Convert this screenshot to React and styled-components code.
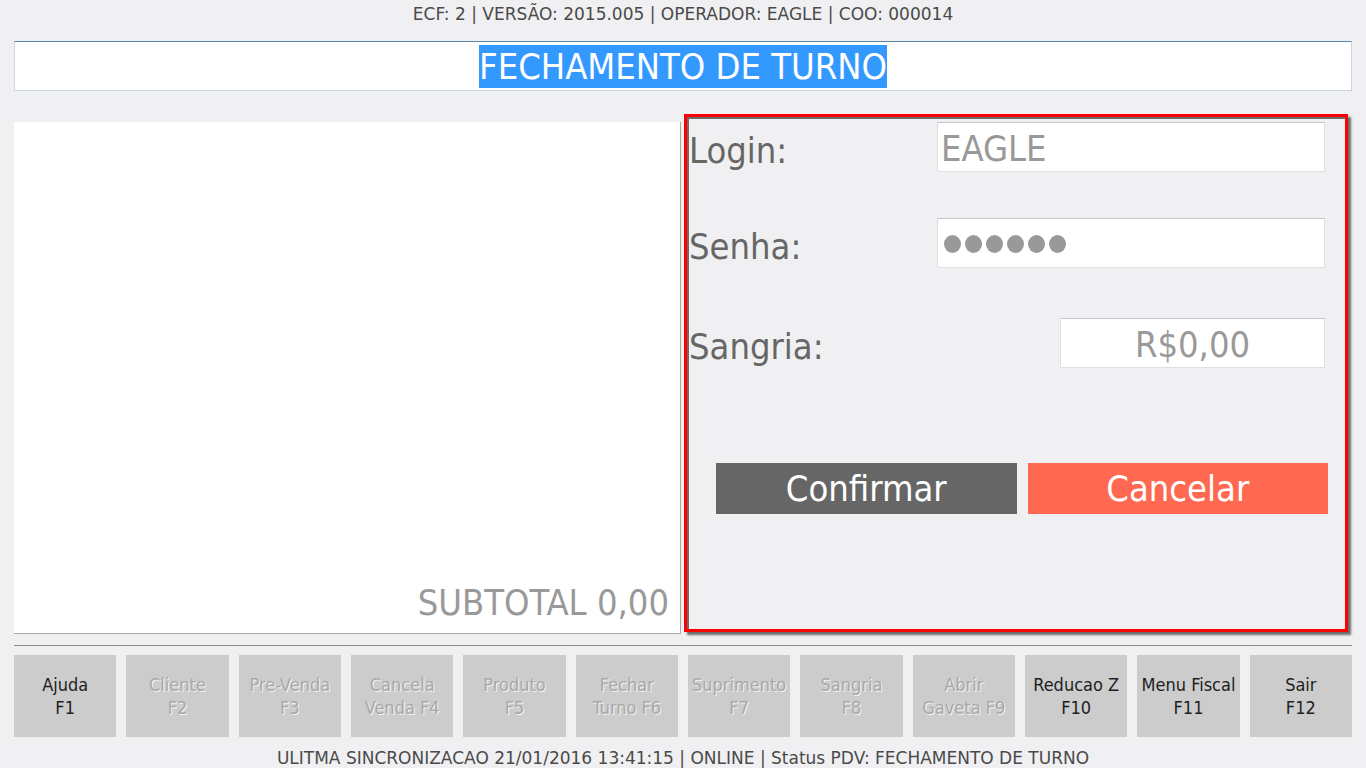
import React from 'react';
import styled, { createGlobalStyle } from 'styled-components';

const GlobalStyle = createGlobalStyle`
  html, body {
    margin: 0;
    padding: 0;
    background: #f0f0f2;
  }
  body {
    font-family: "DejaVu Sans Condensed", "DejaVu Sans", "Liberation Sans", sans-serif;
    font-stretch: condensed;
  }
`;

const Screen = styled.div`
  width: 1366px;
  height: 768px;
  display: flex;
  flex-direction: column;
  box-sizing: border-box;
  padding: 0 14px;
  overflow: hidden;
`;

const InfoBar = styled.div`
  height: 28px;
  display: flex;
  align-items: center;
  justify-content: center;
  font-family: "DejaVu Sans", "Liberation Sans", sans-serif;
  font-stretch: normal;
  font-size: 17px;
  color: #4a4a4a;
`;

const TitleBox = styled.div`
  margin-top: 13px;
  height: 50px;
  box-sizing: border-box;
  background: #fff;
  border: 1px solid #c8d6e2;
  border-top-color: #5b86ab;
  display: flex;
  align-items: center;
  justify-content: center;
`;

const TitleText = styled.span`
  font-size: 36px;
  line-height: 43px;
  color: #fff;
  background: #3399ff;
`;

const Main = styled.div`
  margin-top: 23px;
  display: flex;
  align-items: flex-start;
  gap: 3px;
  margin-right: 4px;
`;

const ItemsPanel = styled.div`
  margin-top: 8px;
  width: 667px;
  height: 512px;
  box-sizing: border-box;
  background: #fff;
  border-right: 1px solid #a8a8a8;
  border-bottom: 1px solid #a8a8a8;
  display: flex;
  align-items: flex-end;
  justify-content: flex-end;
  padding: 0 11px 10px 0;
`;

const Subtotal = styled.div`
  font-size: 36px;
  color: #999;
`;

const LoginPanel = styled.div`
  flex: 1;
  height: 518px;
  box-sizing: border-box;
  border: 3px solid #ff0000;
  box-shadow: 3px 3px 2px rgba(0, 0, 0, 0.55), inset 2px 2px 0 #6c6c6c;
  padding: 5px 20px 0 2px;
  display: flex;
  flex-direction: column;
`;

const FieldRow = styled.div`
  display: flex;
  align-items: center;
  justify-content: space-between;
  height: 50px;
  margin-top: ${(p) => p.$gap || 0}px;
`;

const Label = styled.div`
  font-size: 36px;
  color: #666;
  padding-top: 7px;
`;

const Field = styled.div`
  width: ${(p) => p.$w}px;
  height: 50px;
  box-sizing: border-box;
  background: #fff;
  border: 1px solid #dde0e4;
  border-top-color: #c4c4cc;
  display: flex;
  align-items: center;
  justify-content: ${(p) => (p.$center ? 'center' : 'flex-start')};
  padding-left: ${(p) => (p.$center ? 0 : 3)}px;
  padding-top: 2px;
  font-size: 36px;
  color: #999;
`;

const Dots = styled.span`
  display: flex;
  gap: 4px;
  padding-left: 3px;
`;

const Dot = styled.span`
  width: 17px;
  height: 18px;
  border-radius: 50%;
  background: #999;
`;

const Actions = styled.div`
  margin-top: 95px;
  margin-right: -3px;
  padding-left: 27px;
  display: grid;
  grid-template-columns: 1fr 1fr;
  gap: 11px;
`;

const ActionButton = styled.button`
  height: 51px;
  border: none;
  font-family: inherit;
  font-stretch: condensed;
  font-size: 36px;
  color: #fff;
  background: ${(p) => (p.$danger ? '#ff6851' : '#666666')};
  padding: 0;
  cursor: pointer;
`;

const Divider = styled.div`
  margin-top: 11px;
  height: 1px;
  background: #8c8c8c;
`;

const KeyBar = styled.div`
  margin-top: 9px;
  display: grid;
  grid-template-columns: repeat(12, 1fr);
  gap: 10px;
`;

const KeyButton = styled.button`
  height: 82px;
  border: none;
  background: #cccccc;
  font-family: inherit;
  font-stretch: condensed;
  font-size: 18px;
  line-height: 23px;
  padding: 0;
  white-space: nowrap;
  color: ${(p) => (p.disabled ? '#a8a8a8' : '#1e1e1e')};
  text-shadow: ${(p) => (p.disabled ? '1px 1px 0 #f4f4f4' : 'none')};
`;

const StatusBar = styled.div`
  flex: 1;
  display: flex;
  align-items: center;
  justify-content: center;
  padding-top: 11px;
  font-family: "DejaVu Sans", "Liberation Sans", sans-serif;
  font-stretch: normal;
  font-size: 17px;
  color: #4a4a4a;
`;

const keys = [
  ['Ajuda', 'F1', true],
  ['Cliente', 'F2'],
  ['Pre-Venda', 'F3'],
  ['Cancela', 'Venda F4'],
  ['Produto', 'F5'],
  ['Fechar', 'Turno F6'],
  ['Suprimento', 'F7'],
  ['Sangria', 'F8'],
  ['Abrir', 'Gaveta F9'],
  ['Reducao Z', 'F10', true],
  ['Menu Fiscal', 'F11', true],
  ['Sair', 'F12', true],
];

export default function App() {
  return (
    <>
      <GlobalStyle />
      <Screen>
        <InfoBar>ECF: 2 | VERSÃO: 2015.005 | OPERADOR: EAGLE | COO: 000014</InfoBar>
        <TitleBox>
          <TitleText>FECHAMENTO DE TURNO</TitleText>
        </TitleBox>

        <Main>
          <ItemsPanel>
            <Subtotal>SUBTOTAL 0,00</Subtotal>
          </ItemsPanel>

          <LoginPanel>
            <FieldRow>
              <Label>Login:</Label>
              <Field $w={388}>EAGLE</Field>
            </FieldRow>
            <FieldRow $gap={46}>
              <Label>Senha:</Label>
              <Field $w={388}>
                <Dots>
                  {[0, 1, 2, 3, 4, 5].map((i) => (
                    <Dot key={i} />
                  ))}
                </Dots>
              </Field>
            </FieldRow>
            <FieldRow $gap={50}>
              <Label>Sangria:</Label>
              <Field $w={265} $center>R$0,00</Field>
            </FieldRow>
            <Actions>
              <ActionButton>Confirmar</ActionButton>
              <ActionButton $danger>Cancelar</ActionButton>
            </Actions>
          </LoginPanel>
        </Main>

        <Divider />

        <KeyBar>
          {keys.map(([a, b, on]) => (
            <KeyButton key={b} disabled={!on}>
              {a}
              <br />
              {b}
            </KeyButton>
          ))}
        </KeyBar>

        <StatusBar>
          ULITMA SINCRONIZACAO 21/01/2016 13:41:15 | ONLINE | Status PDV: FECHAMENTO DE TURNO
        </StatusBar>
      </Screen>
    </>
  );
}
